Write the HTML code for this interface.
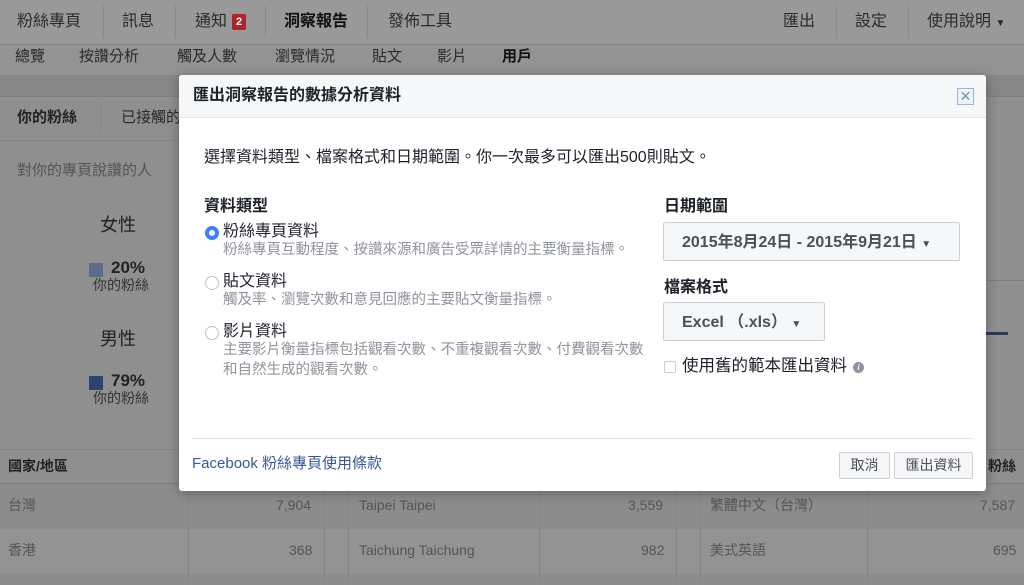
<!DOCTYPE html>
<html><head><meta charset="utf-8"><style>
*{margin:0;padding:0;box-sizing:border-box}
body{width:1024px;height:585px;overflow:hidden;position:relative;background:#8f8f8f;font-family:"Liberation Sans","Noto Sans CJK TC",sans-serif;color:#1d2129}
.a{position:absolute;white-space:nowrap;line-height:1.2}
.nav{position:absolute;left:0;top:0;width:1024px;height:45px;background:#999;border-bottom:1px solid #838383}
.nav .a{font-size:16px;color:#2a2a2a;top:12px}
.sep{position:absolute;top:6px;width:1px;height:32px;background:#8a8a8a}
.sub{position:absolute;left:0;top:45px;width:1024px;height:30px;background:#939393}
.sub .a{font-size:15px;color:#2a2a2a;top:3px}
.band{position:absolute;left:0;top:75px;width:1024px;height:22px;background:#878787;border-bottom:1px solid #7e7e7e}
.row{position:absolute;left:0;width:1024px;height:45px}
.modal{position:absolute;left:179px;top:75px;width:807px;height:416px;background:#fff;border-radius:3px;box-shadow:0 2px 12px rgba(0,0,0,.3)}
.mh{height:43px;background:#f6f7f9;border-bottom:1px solid #e5e5e5;border-radius:3px 3px 0 0}
.modal .desc{font-size:14.5px;color:#90949c;line-height:20px}
.radio{position:absolute;width:14px;height:14px;border-radius:50%;border:1px solid #bec2c9;background:#fff}
.btn{position:absolute;border:1px solid #ced0d4;border-radius:2px;background:#f6f7f9;font-weight:bold;color:#4b4f56}
</style></head><body>
<div class="nav">
<span class="a" style="left:17px">粉絲專頁</span><div class="sep" style="left:103px"></div>
<span class="a" style="left:122px">訊息</span><div class="sep" style="left:175px"></div>
<span class="a" style="left:195px">通知</span><span class="a" style="left:232px;top:14px;width:14px;height:16px;background:#b0222a;color:#fff;font-size:11px;font-weight:bold;text-align:center;line-height:16px;border-radius:2px">2</span><div class="sep" style="left:265px"></div>
<span class="a" style="left:284px;font-weight:bold;color:#111">洞察報告</span><div class="sep" style="left:367px"></div>
<span class="a" style="left:388px">發佈工具</span>
<span class="a" style="left:783px">匯出</span><div class="sep" style="left:836px"></div>
<span class="a" style="left:855px">設定</span><div class="sep" style="left:908px"></div>
<span class="a" style="left:927px">使用說明 <span style="font-size:10px">▼</span></span>
</div>
<div class="sub">
<span class="a" style="left:15px">總覽</span><span class="a" style="left:79px">按讚分析</span><span class="a" style="left:177px">觸及人數</span><span class="a" style="left:275px">瀏覽情況</span><span class="a" style="left:372px">貼文</span><span class="a" style="left:437px">影片</span><span class="a" style="left:502px;font-weight:bold;color:#111">用戶</span>
</div>
<div class="band"></div>
<span class="a" style="left:17px;top:109px;font-size:15px;font-weight:bold;color:#222">你的粉絲</span>
<div class="a" style="left:100px;top:102px;width:1px;height:32px;background:#858585"></div>
<span class="a" style="left:121px;top:109px;font-size:15px;color:#2a2a2a">已接觸的</span>
<div class="a" style="left:0;top:140px;width:179px;height:1px;background:#858585"></div>
<span class="a" style="left:17px;top:162px;font-size:15px;color:#555">對你的專頁說讚的人</span>
<span class="a" style="left:100px;top:215px;font-size:18px;color:#222">女性</span>
<div class="a" style="left:89px;top:263px;width:14px;height:14px;background:#5d6b8a"></div>
<span class="a" style="left:111px;top:258px;font-size:17px;font-weight:bold;color:#222">20%</span>
<span class="a" style="left:93px;top:277px;font-size:14px;color:#333">你的粉絲</span>
<span class="a" style="left:100px;top:329px;font-size:18px;color:#222">男性</span>
<div class="a" style="left:89px;top:376px;width:14px;height:14px;background:#2b4373"></div>
<span class="a" style="left:111px;top:371px;font-size:17px;font-weight:bold;color:#222">79%</span>
<span class="a" style="left:93px;top:390px;font-size:14px;color:#333">你的粉絲</span>
<div class="a" style="left:986px;top:280px;width:38px;height:1px;background:#7d7d7d"></div>
<div class="a" style="left:986px;top:332px;width:22px;height:3px;background:#2b3a55"></div>
<div class="row" style="top:449px;height:35px;background:#8f8f8f;border-top:1px solid #838383;border-bottom:1px solid #7e7e7e"></div>
<span class="a" style="left:8px;top:458px;font-size:14px;font-weight:bold;color:#222">國家/地區</span>
<span class="a" style="left:988px;top:458px;font-size:14px;font-weight:bold;color:#222">粉絲</span>
<div class="row" style="top:484px;background:#8c8c8c"></div>
<div class="row" style="top:529px;background:#939393"></div>
<div class="row" style="top:574px;height:11px;background:#8c8c8c"></div>
<div class="a" style="left:188px;top:484px;width:1px;height:101px;background:#838383"></div>
<div class="a" style="left:324px;top:484px;width:1px;height:101px;background:#838383"></div>
<div class="a" style="left:348px;top:484px;width:1px;height:101px;background:#838383"></div>
<div class="a" style="left:539px;top:484px;width:1px;height:101px;background:#838383"></div>
<div class="a" style="left:676px;top:484px;width:1px;height:101px;background:#838383"></div>
<div class="a" style="left:700px;top:484px;width:1px;height:101px;background:#838383"></div>
<div class="a" style="left:867px;top:484px;width:1px;height:101px;background:#838383"></div>
<div style="font-size:14px;color:#555">
<span class="a" style="left:8px;top:497px">台灣</span><span class="a" style="left:276px;top:497px">7,904</span>
<span class="a" style="left:359px;top:497px">Taipei Taipei</span><span class="a" style="left:628px;top:497px">3,559</span>
<span class="a" style="left:710px;top:497px">繁體中文（台灣）</span><span class="a" style="left:980px;top:497px">7,587</span>
<span class="a" style="left:8px;top:542px">香港</span><span class="a" style="left:289px;top:542px">368</span>
<span class="a" style="left:359px;top:542px">Taichung Taichung</span><span class="a" style="left:641px;top:542px">982</span>
<span class="a" style="left:710px;top:542px">美式英語</span><span class="a" style="left:993px;top:542px">695</span>
</div>

<div class="modal">
<div class="mh"></div>
<span class="a" style="left:14px;top:11px;font-size:16px;font-weight:bold;color:#1d2129">匯出洞察報告的數據分析資料</span>
<div class="a" style="left:778px;top:13px;width:17px;height:17px;border:1px solid #9cb4d8;background:#eef2f8;color:#7d8fb0;font-size:14px;line-height:15px;text-align:center">✕</div>
<span class="a" style="left:25px;top:73px;font-size:16px">選擇資料類型、檔案格式和日期範圍。你一次最多可以匯出500則貼文。</span>
<span class="a" style="left:25px;top:122px;font-size:16px;font-weight:bold">資料類型</span>
<div class="radio" style="left:26px;top:151px;border:4px solid #4080ff"></div>
<span class="a" style="left:44px;top:147px;font-size:16px;line-height:19px">粉絲專頁資料</span>
<span class="a desc" style="left:44px;top:165px">粉絲專頁互動程度、按讚來源和廣告受眾詳情的主要衡量指標。</span>
<div class="radio" style="left:26px;top:201px"></div>
<span class="a" style="left:44px;top:197px;font-size:16px;line-height:19px">貼文資料</span>
<span class="a desc" style="left:44px;top:215px">觸及率、瀏覽次數和意見回應的主要貼文衡量指標。</span>
<div class="radio" style="left:26px;top:251px"></div>
<span class="a" style="left:44px;top:247px;font-size:16px;line-height:19px">影片資料</span>
<span class="a desc" style="left:44px;top:265px">主要影片衡量指標包括觀看次數、不重複觀看次數、付費觀看次數<br>和自然生成的觀看次數。</span>
<span class="a" style="left:485px;top:122px;font-size:16px;font-weight:bold">日期範圍</span>
<div class="btn" style="left:484px;top:147px;width:297px;height:39px"></div>
<span class="a" style="left:503px;top:158px;font-size:16px;font-weight:bold;color:#4b4f56">2015年8月24日 - 2015年9月21日 <span style="font-size:10px">▼</span></span>
<span class="a" style="left:485px;top:203px;font-size:16px;font-weight:bold">檔案格式</span>
<div class="btn" style="left:484px;top:227px;width:162px;height:39px"></div>
<span class="a" style="left:503px;top:238px;font-size:16px;font-weight:bold;color:#4b4f56">Excel （.xls） <span style="font-size:10px">▼</span></span>
<div class="a" style="left:485px;top:286px;width:12px;height:12px;border:1px solid #ccc;border-radius:2px"></div>
<span class="a" style="left:503px;top:282px;font-size:16.5px">使用舊的範本匯出資料</span>
<div class="a" style="left:674px;top:287px;width:11px;height:11px;border-radius:50%;background:#8d949e;color:#fff;font-size:8px;line-height:11px;text-align:center;font-style:italic;font-weight:bold">i</div>
<div class="a" style="left:13px;top:363px;width:781px;height:1px;background:#e5e5e5"></div>
<span class="a" style="left:13px;top:380px;font-size:15px;color:#365899">Facebook 粉絲專頁使用條款</span>
<div class="btn" style="left:660px;top:377px;width:51px;height:27px;font-weight:normal;font-size:14px;text-align:center;line-height:25px;color:#4b4f56">取消</div>
<div class="btn" style="left:715px;top:377px;width:79px;height:27px;font-weight:normal;font-size:14px;text-align:center;line-height:25px;color:#4b4f56">匯出資料</div>
</div>
</body></html>
